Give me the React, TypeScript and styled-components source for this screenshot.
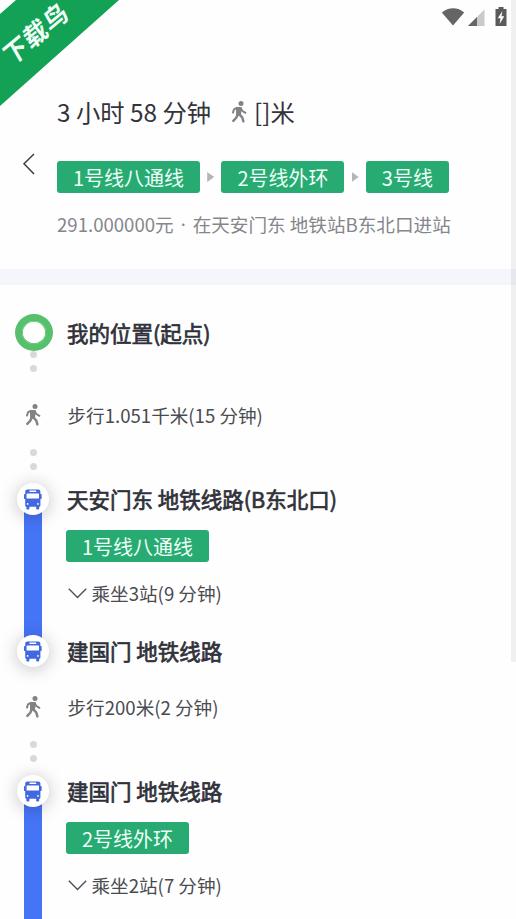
import React from "react";
import styled, { createGlobalStyle } from "styled-components";

const GlobalStyle = createGlobalStyle`
  * { box-sizing: border-box; }
  html, body { margin: 0; background: #fefefe; }
  body { overflow: hidden; font-family: "Noto Sans CJK SC", "Noto Sans", sans-serif; }
`;

const Screen = styled.main`
  position: relative;
  width: 516px;
  height: 919px;
  overflow: hidden;
  background: #fefefe;
`;

const Ribbon = styled.div`
  position: absolute;
  top: 0;
  left: 0;
  width: 119px;
  height: 106px;
  background: #13a156;
  clip-path: polygon(16px 0, 119px 0, 0 106px, 0 14px);
`;

const RibbonText = styled.span`
  position: absolute;
  left: -5px;
  top: 18px;
  width: 80px;
  height: 28px;
  line-height: 28px;
  text-align: center;
  white-space: nowrap;
  font-size: 25px;
  font-weight: 700;
  letter-spacing: 1px;
  color: #effff5;
  transform: rotate(-40deg) skewX(-10deg);
`;

const ScrollTrack = styled.div`
  position: absolute;
  top: 0;
  right: 0;
  width: 5px;
  height: 662px;
  background: rgba(0, 0, 0, 0.055);
`;

const StatusBar = styled.div`
  display: flex;
  justify-content: flex-end;
  align-items: flex-start;
  height: 34px;
  padding: 7px 9px 0 0;
`;

const Header = styled.header`
  display: grid;
  grid-template-columns: 57px 1fr;
  height: 235px;
`;

const BackButton = styled.button`
  display: flex;
  align-items: flex-start;
  padding: 119px 0 0 22px;
  border: 0;
  background: none;
`;

const Summary = styled.div`
  display: flex;
  flex-direction: column;
  padding-top: 59px;
`;

const Title = styled.h1`
  display: flex;
  align-items: center;
  height: 36px;
  margin: 0 0 32px;
  font-size: 24.3px;
  font-weight: 400;
  white-space: pre;
  color: #33343b;
  svg { margin: 1px 7px 0 20px; }
`;

const Lines = styled.div`
  display: flex;
  align-items: center;
  margin-bottom: 15px;
`;

const Pill = styled.span`
  display: block;
  width: max-content;
  height: 32px;
  padding: 0 15.9px;
  border-radius: 3px;
  background: #27ab73;
  color: #effff7;
  font-size: 20px;
  line-height: 33px;
  white-space: nowrap;
`;

const NextArrow = styled.span`
  width: 7px;
  height: 10px;
  margin: 0 7.3px;
  background: #b4b4bb;
  clip-path: polygon(0 0, 100% 50%, 0 100%);
`;

const Fare = styled.p`
  display: flex;
  margin: 0;
  height: 32px;
  line-height: 32px;
  font-size: 18.6px;
  white-space: pre;
  color: #85868b;
`;

const Separator = styled.span`
  width: 19px;
  text-align: center;
  font-family: "Noto Sans", sans-serif;
`;

const Divider = styled.div`
  height: 16px;
  background: #f5f6fc;
`;

const Leg = styled.section<{ $height: number }>`
  display: grid;
  grid-template-columns: 66px 1fr;
  grid-template-rows: 100%;
  height: ${(p) => p.$height}px;
`;

const Rail = styled.div<{ $top?: number }>`
  display: flex;
  flex-direction: column;
  align-items: center;
  padding-top: ${(p) => p.$top ?? 0}px;
`;

const Body = styled.div<{ $top?: number }>`
  display: flex;
  flex-direction: column;
  padding-top: ${(p) => p.$top ?? 0}px;
`;

const StartRing = styled.div`
  width: 38px;
  height: 37px;
  margin-left: 1px;
  border: 7px solid #57c06d;
  border-radius: 50%;
  box-shadow: inset 0 0 0 0.8px #57c06d;
`;

const Dots = styled.div<{ $gap: number }>`
  display: flex;
  flex-direction: column;
  gap: 7.4px;
  margin: ${(p) => p.$gap}px 0 0 1px;
`;

const Dot = styled.i`
  width: 7px;
  height: 7px;
  border-radius: 50%;
  background: #d9d9d9;
`;

const Badge = styled.div`
  display: flex;
  flex: none;
  align-items: center;
  justify-content: center;
  width: 32px;
  height: 32px;
  z-index: 1;
  border-radius: 50%;
  background: #fff;
  box-shadow: 0 2px 18px rgba(0, 0, 0, 0.24);
`;

const Track = styled.div`
  flex: 1;
  width: 18px;
  margin: -5px 0;
  background: #4674f6;
`;

const Place = styled.h2`
  height: 32px;
  margin: 0;
  padding-left: 1px;
  font-size: 21.5px;
  font-weight: 400;
  line-height: 32px;
  white-space: pre;
  color: #30313a;
  -webkit-text-stroke: 0.7px #30313a;
`;

const Arrival = styled(Place)`
  margin-top: auto;
`;

const LinePill = styled(Pill)`
  margin-top: 15px;
`;

const Detail = styled.div`
  display: flex;
  align-items: center;
  height: 30px;
  padding-left: 1.5px;
  font-size: 18.6px;
  white-space: pre;
  color: #4a4b50;
`;

const Expand = styled(Detail)`
  margin-top: 15px;
  gap: 5px;
  svg { margin-top: 3px; }
`;

const WalkIcon = () => (
  <svg width="16" height="22" viewBox="-0.700 0 16 22" fill="none" stroke="#818286" strokeLinecap="round" strokeLinejoin="round">
    <circle cx="9.300" cy="2.600" r="2.500" fill="#818286" stroke="none" />
    <path d="M5.200 6.800h4l-.8 7H5.300z" fill="#818286" strokeWidth="1.800" />
    <path d="M5 6.800 2.300 8.300 1.300 11.600M9 7.400l1.700 2.600 3 1.800" strokeWidth="2" />
    <path d="m6 13.300-1.400 3.400-3 3.200M7.300 13.200l3.200 3.200 1.200 4" strokeWidth="2.400" />
  </svg>
);

const BusIcon = () => (
  <svg width="18" height="21" viewBox="0 0 18 21" fill="#4168df">
    <path d="M3.400.4h10.800a2.200 2.200 0 0 1 2.200 2.200v14a1.200 1.200 0 0 1-1.200 1.200H2.400a1.200 1.200 0 0 1-1.200-1.200v-14A2.200 2.200 0 0 1 3.400.4z" />
    <path d="M2.400 17h3v2.800a.8.8 0 0 1-.8.8H3.200a.8.8 0 0 1-.8-.8zM12.200 17h3v2.800a.8.8 0 0 1-.8.8H13a.8.8 0 0 1-.8-.8z" />
    <rect x="0" y="5" width="1.600" height="5" rx=".6" />
    <rect x="16" y="5" width="1.600" height="5" rx=".6" />
    <g fill="#fff">
      <rect x="5.300" y="1.600" width="7" height="1.400" rx=".7" />
      <rect x="2.600" y="4.600" width="12.400" height="5" rx=".4" />
      <circle cx="3.600" cy="14.900" r=".9" />
      <circle cx="14" cy="14.900" r=".9" />
    </g>
  </svg>
);

const StatusIcons = () => (
  <svg width="66" height="20" viewBox="0 0 66 20">
    <path d="M.8 5.500C7.500-.2 17-.2 23.200 5.500L12 18.500z" fill="#656565" />
    <path d="M43.500 2.500V19H27z" fill="#cacaca" />
    <path d="M36 10v9h-9z" fill="#656565" />
    <path d="M57.500 0h5v2h3v17h-11V2h3z" fill="#5b5b5b" />
    <path d="m61.400 4-4.600 7.200h2.700L58.600 17l4.700-7.700h-2.800z" fill="#fff" />
  </svg>
);

const BackIcon = () => (
  <svg width="14" height="22" viewBox="0 0 14 22" fill="none" stroke="#3d3e42" strokeWidth="1.500">
    <path d="m12 1-10 9.700L12 21" />
  </svg>
);

const ChevronIcon = () => (
  <svg width="19" height="11" viewBox="0 0 19 11" fill="none" stroke="#505156" strokeWidth="1.400">
    <path d="m.8.8 8.700 8.800L18.200.8" />
  </svg>
);

const DotPair = ({ gap }: { gap: number }) => (
  <Dots $gap={gap}>
    <Dot />
    <Dot />
  </Dots>
);

const Walk = ({ height, top, text, gap }: { height: number; top: number; text: string; gap: number }) => (
  <Leg $height={height}>
    <Rail $top={top}>
      <WalkIcon />
      <DotPair gap={gap} />
    </Rail>
    <Body $top={top - 5}>
      <Detail>{text}</Detail>
    </Body>
  </Leg>
);

type RideProps = { from: string; line: string; stops: string; to?: string };

const Ride = ({ from, line, stops, to }: RideProps) => (
  <Leg $height={184}>
    <Rail>
      <Badge><BusIcon /></Badge>
      <Track />
      {to && <Badge><BusIcon /></Badge>}
    </Rail>
    <Body>
      <Place>{from}</Place>
      <LinePill>{line}</LinePill>
      <Expand>
        <ChevronIcon />
        <span>{stops}</span>
      </Expand>
      {to && <Arrival>{to}</Arrival>}
    </Body>
  </Leg>
);

export default function App() {
  return (
    <Screen>
      <GlobalStyle />
      <StatusBar><StatusIcons /></StatusBar>
      <Header>
        <BackButton aria-label="返回"><BackIcon /></BackButton>
        <Summary>
          <Title>
            3 小时 58 分钟
            <WalkIcon />
            []米
          </Title>
          <Lines>
            <Pill>1号线八通线</Pill>
            <NextArrow />
            <Pill>2号线外环</Pill>
            <NextArrow />
            <Pill>3号线</Pill>
          </Lines>
          <Fare>
            <span>291.000000元</span>
            <Separator>·</Separator>
            <span>在天安门东 地铁站B东北口进站</span>
          </Fare>
        </Summary>
      </Header>
      <Divider />
      <Leg $height={99}>
        <Rail $top={29}>
          <StartRing />
          <DotPair gap={0} />
        </Rail>
        <Body $top={32}>
          <Place>我的位置(起点)</Place>
        </Body>
      </Leg>
      <Walk height={99} top={20} gap={23} text="步行1.051千米(15 分钟)" />
      <Ride from="天安门东 地铁线路(B东北口)" line="1号线八通线" stops="乘坐3站(9 分钟)" to="建国门 地铁线路" />
      <Walk height={108} top={29} gap={23} text="步行200米(2 分钟)" />
      <Ride from="建国门 地铁线路" line="2号线外环" stops="乘坐2站(7 分钟)" />
      <Ribbon><RibbonText>下载鸟</RibbonText></Ribbon>
      <ScrollTrack />
    </Screen>
  );
}
